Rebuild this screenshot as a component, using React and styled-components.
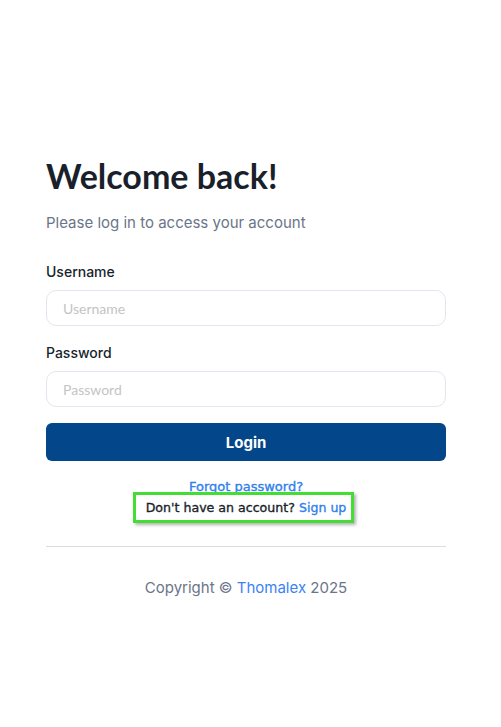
import React from 'react'
import styled, {createGlobalStyle} from 'styled-components';

const GlobalStyle = createGlobalStyle`
    body {
        margin: 0;
        background: #ffffff;
        font-family: Inter, "Liberation Sans", sans-serif;
    }
`;

const Page = styled.div`
    display: flex;
    padding: 152px 0 0 46px;
`;

const Card = styled.div`
    width: 400px;
    display: flex;
    flex-direction: column;
`;

const Title = styled.h1`
    margin: 0;
    font-family: Lato, sans-serif;
    font-weight: 700;
    font-size: 34px;
    line-height: 48px;
    color: #1a1f2c;
`;

const Subtitle = styled.p`
    margin: 12px 0 0;
    font-size: 15px;
    line-height: 22px;
    color: #6b7589;
`;

const Form = styled.form`
    display: flex;
    flex-direction: column;
    margin-top: 28px;
`;

const Field = styled.div`
    display: flex;
    flex-direction: column;
    gap: 8px;
    margin-bottom: 17px;
    &:last-of-type {
        margin-bottom: 16px;
    }
`;

const Label = styled.label`
    font-size: 14px;
    font-weight: 500;
    line-height: 20px;
    color: #1a1f2c;
`;

const Input = styled.input`
    box-sizing: border-box;
    height: 36px;
    padding: 0 16px;
    border: 1px solid #e2e6ee;
    border-radius: 10px;
    font-family: Lato, sans-serif;
    font-size: 14px;
    color: #1a1f2c;
    outline: none;
    &::placeholder {
        color: #c4c4c4;
    }
`;

const Button = styled.button`
    height: 38px;
    border: none;
    border-radius: 6px;
    background: #04468a;
    color: #ffffff;
    font-family: Inter, sans-serif;
    font-weight: 700;
    font-size: 15px;
    cursor: pointer;
`;

const Links = styled.div`
    display: flex;
    flex-direction: column;
    align-items: center;
    margin-top: 18px;
    font-family: "DejaVu Sans", Verdana, sans-serif;
    -webkit-text-stroke: 0.35px currentColor;
`;

const Forgot = styled.a`
    color: #2f80ed;
    font-size: 13px;
    text-decoration: none;
    line-height: 16px;
`;

const SignupBox = styled.div`
    margin: -3px 5px 0 0;
    padding: 3px 5px 3px 10px;
    border: 3px solid #44dd33;
    box-shadow: 2px 2px 3px rgba(0, 0, 0, 0.3);
    background: #ffffff;
    color: #1a1f2c;
    font-size: 12.6px;
    line-height: 19px;
`;

const Link = styled.a`
    color: #2f80ed;
    text-decoration: none;
`;

const Divider = styled.hr`
    margin: 23px 0 0;
    border: none;
    border-top: 1px solid #dddddd;
`;

const Footer = styled.p`
    margin: 30px 0 0;
    text-align: center;
    font-size: 15px;
    line-height: 22px;
    color: #6b7589;
`;

const FooterLink = styled.a`
    color: #3b82f6;
    text-decoration: none;
`;

const App = () => (
    <>
        <GlobalStyle />
        <Page>
            <Card>
                <Title>Welcome back!</Title>
                <Subtitle>Please log in to access your account</Subtitle>
                <Form onSubmit={e => e.preventDefault()}>
                    <Field>
                        <Label htmlFor="username">Username</Label>
                        <Input id="username" placeholder="Username" />
                    </Field>
                    <Field>
                        <Label htmlFor="password">Password</Label>
                        <Input id="password" type="password" placeholder="Password" />
                    </Field>
                    <Button type="submit">Login</Button>
                </Form>
                <Links>
                    <Forgot href="#">Forgot password?</Forgot>
                    <SignupBox>
                        Don't have an account? <Link href="#">Sign up</Link>
                    </SignupBox>
                </Links>
                <Divider />
                <Footer>
                    Copyright © <FooterLink href="#">Thomalex</FooterLink> 2025
                </Footer>
            </Card>
        </Page>
    </>
);

export default App;
